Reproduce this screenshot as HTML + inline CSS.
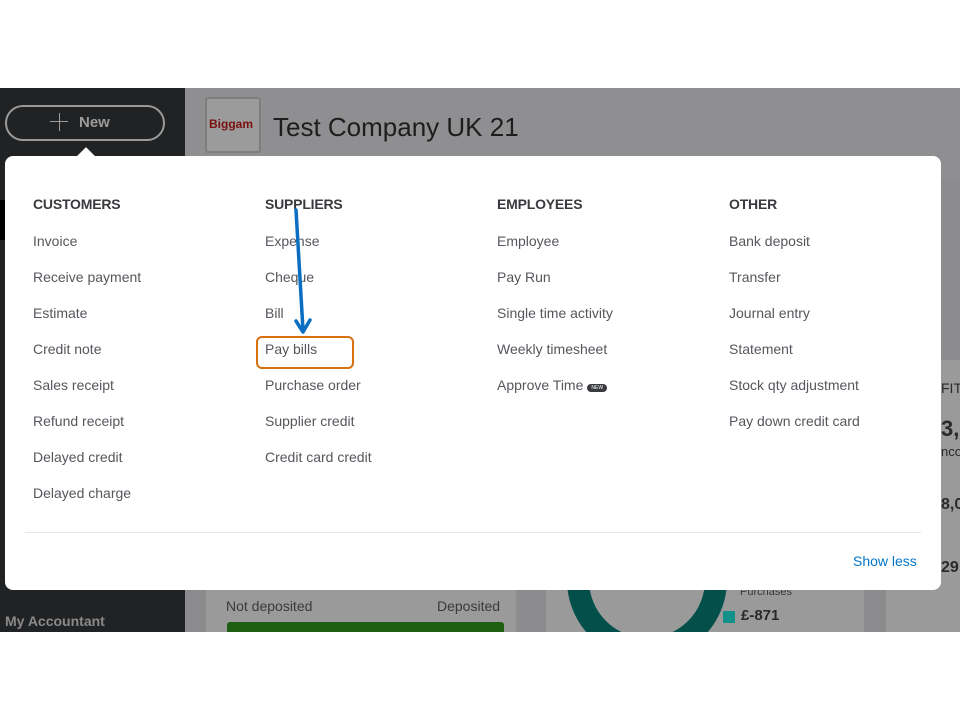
<!DOCTYPE html>
<html><head><style>
*{margin:0;padding:0;box-sizing:border-box}
body{width:960px;height:720px;background:#fff;position:relative;overflow:hidden;font-family:"Liberation Sans",sans-serif}
.abs{position:absolute}
.col div{position:absolute;font-size:14px;color:#55575c;white-space:nowrap}
.col .h{font-weight:bold;color:#393a3d;font-size:14px;letter-spacing:-0.2px}
</style></head><body>
<div class="abs" style="left:0;top:88px;width:185px;height:544px;background:#212224"></div>
<div class="abs" style="left:185px;top:88px;width:775px;height:544px;background:#8c8c8e"></div>
<div class="abs" style="left:185px;top:88px;width:775px;height:92px;background:#8f8f91"></div>
<div class="abs" style="left:0;top:200px;width:5px;height:40px;background:#000"></div>
<div class="abs" style="left:5px;top:105px;width:160px;height:36px;border:2px solid #9a9a9a;border-radius:18px;color:#9c9c9c;font-size:15px;font-weight:bold;padding:7px 0 0 72px">New</div>
<div class="abs" style="left:50px;top:121px;width:18px;height:1px;background:#9c9c9c"></div>
<div class="abs" style="left:59px;top:113px;width:1px;height:18px;background:#9c9c9c"></div>
<div class="abs" style="left:205px;top:97px;width:56px;height:56px;background:#9b9b9b;border:2px solid #7e7e7e;border-radius:3px"></div>
<div class="abs" style="left:209px;top:117px;font-size:12px;font-weight:bold;color:#7a1010">Biggam</div>
<div class="abs" style="left:273px;top:112px;font-size:26px;color:#1d1d1d">Test Company UK 21</div>
<div class="abs" style="left:206px;top:590px;width:310px;height:42px;background:#9a9a9a"></div>
<div class="abs" style="left:226px;top:598px;font-size:14px;color:#3a3a3a">Not deposited</div>
<div class="abs" style="left:437px;top:598px;font-size:14px;color:#3a3a3a">Deposited</div>
<div class="abs" style="left:227px;top:622px;width:277px;height:10px;background:#1e5e12;border-radius:3px 3px 0 0"></div>
<div class="abs" style="left:546px;top:580px;width:318px;height:52px;background:#9a9a9a"></div>
<div class="abs" style="left:567px;top:500px;width:160px;height:160px;border:22px solid #03504b;border-radius:50%;clip-path:inset(90px 0 28px 0)"></div>
<div class="abs" style="left:740px;top:586px;font-size:11px;color:#3a3a3a">Purchases</div>
<div class="abs" style="left:723px;top:611px;width:12px;height:12px;background:#139089"></div>
<div class="abs" style="left:741px;top:607px;font-size:15px;font-weight:bold;color:#2a2a2a">£-871</div>
<div class="abs" style="left:886px;top:360px;width:74px;height:272px;background:#9a9a9a"></div>
<div class="abs" style="left:941px;top:380px;font-size:14px;color:#2a2a2a">FIT</div>
<div class="abs" style="left:941px;top:416px;font-size:22px;font-weight:bold;color:#2a2a2a">3,</div>
<div class="abs" style="left:941px;top:444px;font-size:13px;color:#2a2a2a">nco</div>
<div class="abs" style="left:941px;top:496px;font-size:16px;font-weight:bold;color:#2a2a2a">8,0</div>
<div class="abs" style="left:941px;top:559px;font-size:16px;font-weight:bold;color:#2a2a2a">29</div>
<div class="abs" style="left:5px;top:613px;font-size:14px;font-weight:bold;color:#8a8a8a">My Accountant</div>
<div class="abs" style="left:5px;top:156px;width:936px;height:434px;background:#fff;border-radius:8px"></div>
<div class="abs" style="left:79px;top:150px;width:14px;height:14px;background:#fff;transform:rotate(45deg)"></div>
<div class="col">
<div class="h" style="left:33px;top:196px">CUSTOMERS</div>
<div style="left:33px;top:233px">Invoice</div>
<div style="left:33px;top:269px">Receive payment</div>
<div style="left:33px;top:305px">Estimate</div>
<div style="left:33px;top:341px">Credit note</div>
<div style="left:33px;top:377px">Sales receipt</div>
<div style="left:33px;top:413px">Refund receipt</div>
<div style="left:33px;top:449px">Delayed credit</div>
<div style="left:33px;top:485px">Delayed charge</div>
<div class="h" style="left:265px;top:196px">SUPPLIERS</div>
<div style="left:265px;top:233px">Expense</div>
<div style="left:265px;top:269px">Cheque</div>
<div style="left:265px;top:305px">Bill</div>
<div style="left:265px;top:341px">Pay bills</div>
<div style="left:265px;top:377px">Purchase order</div>
<div style="left:265px;top:413px">Supplier credit</div>
<div style="left:265px;top:449px">Credit card credit</div>
<div class="h" style="left:497px;top:196px">EMPLOYEES</div>
<div style="left:497px;top:233px">Employee</div>
<div style="left:497px;top:269px">Pay Run</div>
<div style="left:497px;top:305px">Single time activity</div>
<div style="left:497px;top:341px">Weekly timesheet</div>
<div style="left:497px;top:377px">Approve Time <span style="display:inline-block;width:20px;height:8px;background:#393a3d;border-radius:4px;font-size:5px;color:#fff;line-height:8px;text-align:center;vertical-align:1px">NEW</span></div>
<div class="h" style="left:729px;top:196px">OTHER</div>
<div style="left:729px;top:233px">Bank deposit</div>
<div style="left:729px;top:269px">Transfer</div>
<div style="left:729px;top:305px">Journal entry</div>
<div style="left:729px;top:341px">Statement</div>
<div style="left:729px;top:377px">Stock qty adjustment</div>
<div style="left:729px;top:413px">Pay down credit card</div>
<div style="left:853px;top:553px;color:#0077c5">Show less</div>
</div>
<div class="abs" style="left:25px;top:532px;width:896px;height:1px;background:#e6e7ea"></div>
<div class="abs" style="left:256px;top:336px;width:98px;height:33px;border:2.5px solid #d9700f;border-radius:6px"></div>
<svg class="abs" style="left:0;top:0" width="960" height="720"><g stroke="#0a6fc2" stroke-width="3.5" fill="none" stroke-linecap="round" stroke-linejoin="round"><path d="M296 210 L303 330"/><path d="M296 321 L303 332 L310 320"/></g></svg>
</body></html>
